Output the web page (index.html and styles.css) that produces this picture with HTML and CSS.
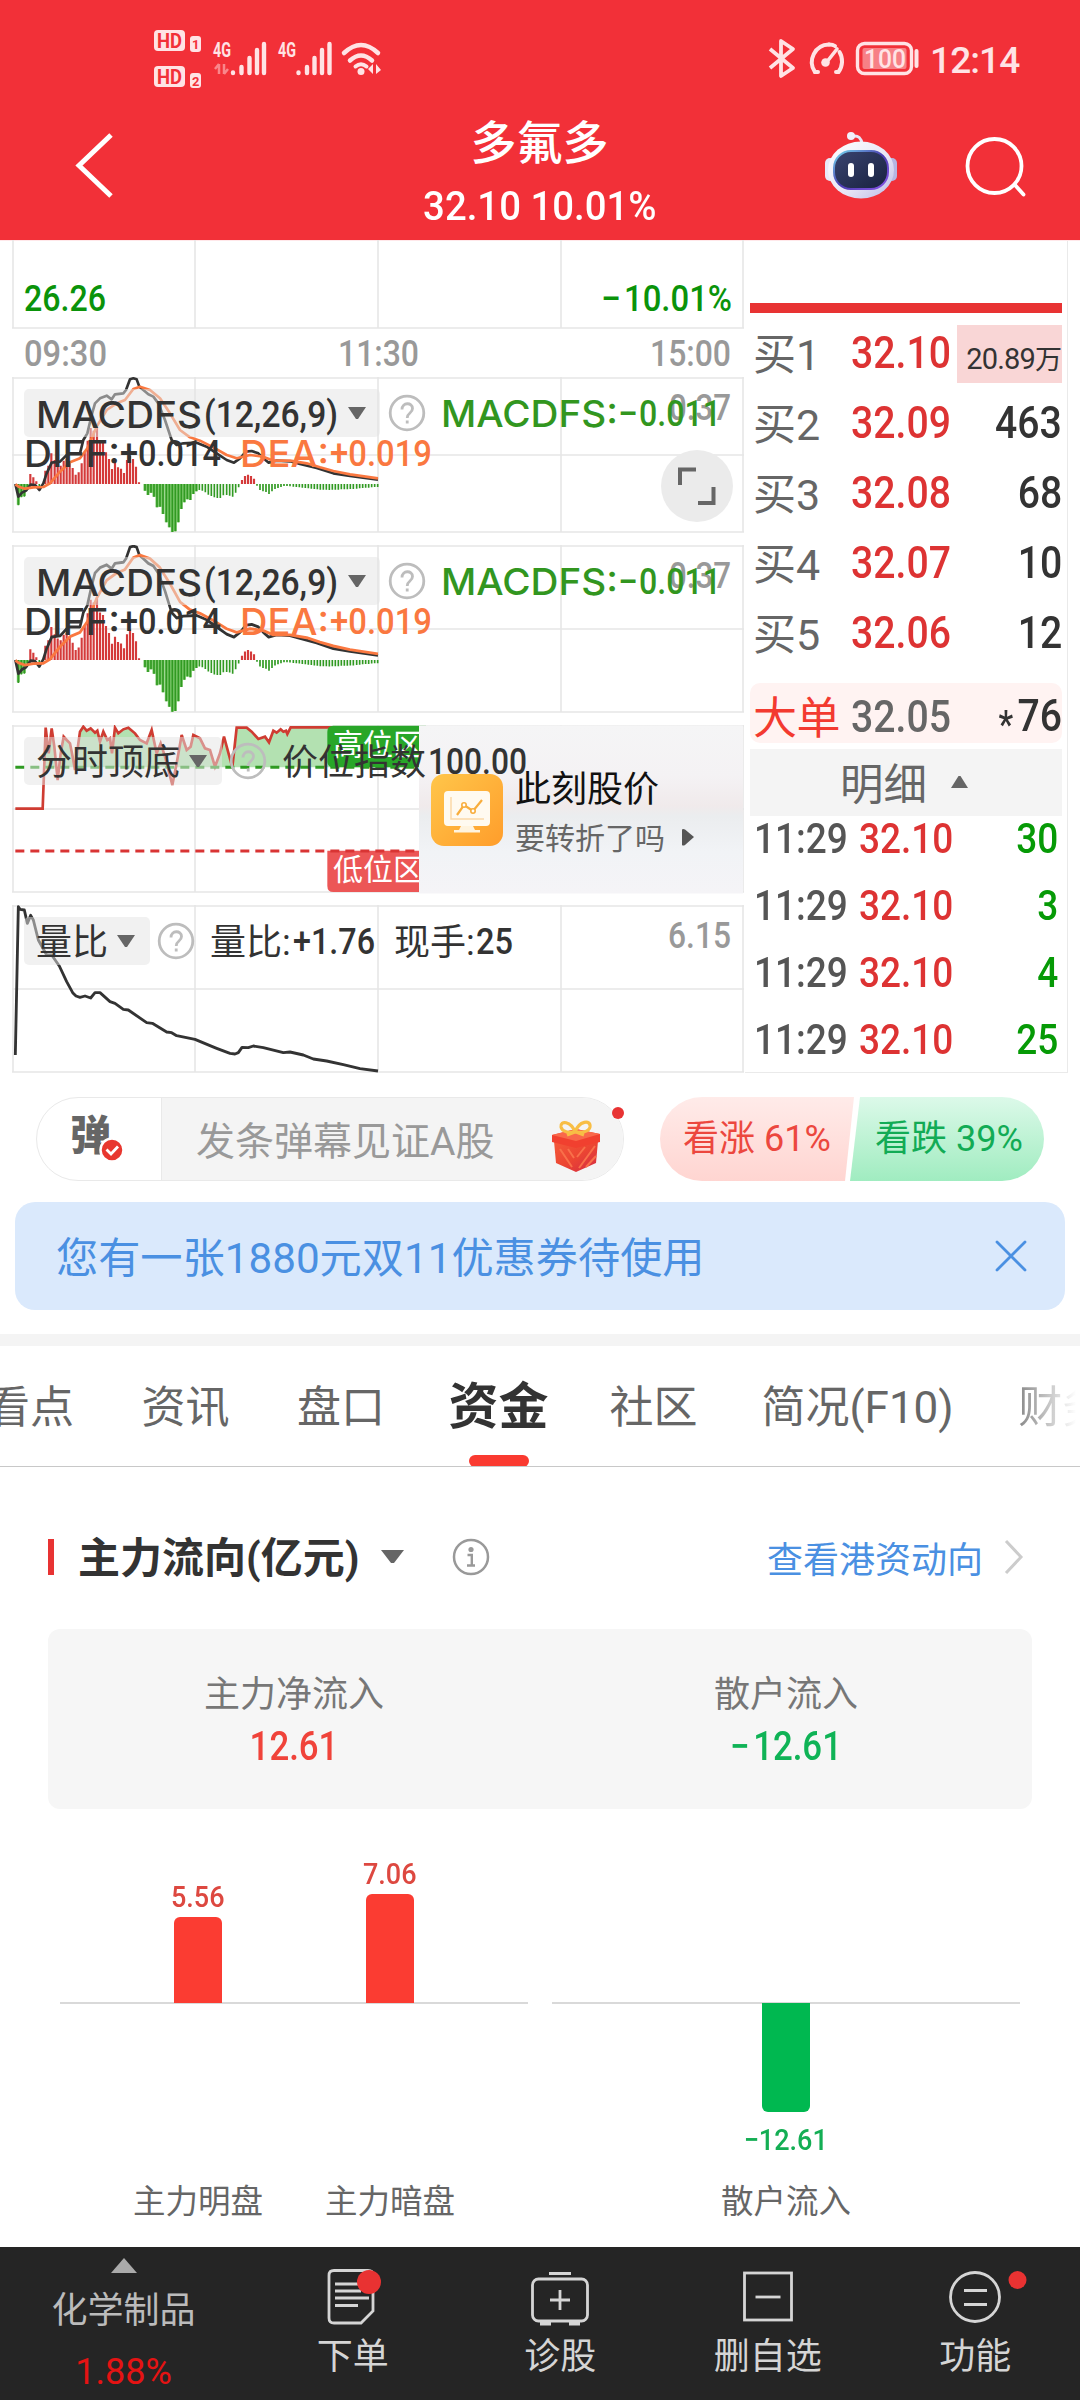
FILE: index.html
```html
<!DOCTYPE html>
<html lang="zh-CN">
<head>
<meta charset="utf-8">
<title>多氟多 32.10 10.01%</title>
<link rel="stylesheet" href="styles.css">
</head>
<body>
<header class="top">
  <div class="status">
    <svg class="status-left" width="240" height="70" viewBox="150 24 240 70">
      <g fill="#ffe3e5">
        <rect x="154" y="30" width="31" height="21" rx="4"/><rect x="190" y="36" width="11" height="16" rx="3"/>
        <rect x="154" y="66" width="31" height="21" rx="4"/><rect x="190" y="73" width="11" height="15" rx="3"/>
        <text x="213" y="57" font-size="20" font-weight="700" textLength="18" lengthAdjust="spacingAndGlyphs">4G</text>
        <text x="278" y="57" font-size="20" font-weight="700" textLength="18" lengthAdjust="spacingAndGlyphs">4G</text>
      </g>
      <g fill="#f23038" font-weight="700">
        <text x="157" y="48" font-size="21" textLength="25" lengthAdjust="spacingAndGlyphs">HD</text>
        <text x="157" y="84" font-size="21" textLength="25" lengthAdjust="spacingAndGlyphs">HD</text>
        <text x="192" y="49" font-size="13">1</text><text x="192" y="85.500" font-size="13">2</text>
      </g>
      <g stroke="#ffe3e5" stroke-width="4.400" stroke-linecap="round" fill="none">
        <path d="M233 73v-.5M241.500 73v-6M249.500 73v-15M257 73v-23M264 73v-29M298.500 73v-.5M307 73v-6M314.500 73v-15M322 73v-23M329.500 73v-29"/>
        <path d="M344 53q17-16 34 0M350 60.500q11-10 22 0" stroke-width="4.500"/>
        <path d="M355.500 66.500q5.500-4.500 11 0" stroke-width="4"/>
      </g>
      <circle cx="361" cy="71.500" r="3.500" fill="#ffe3e5"/>
      <path d="M373 64v10l-5-5zM376 64v10l5-4z" fill="#ffe3e5"/>
      <path d="M219 64v10M219 64l-4 5M224 64v10M224 74l4-5" stroke="#f9868b" stroke-width="2.500" fill="none"/>
    </svg>
    <svg class="status-right" width="160" height="44" viewBox="764 36 160 44" fill="none" stroke="#ffe3e5">
      <path d="M770 49l23 19-12 8V41l12 8-23 19" stroke-width="3.800" stroke-linejoin="round"/>
      <path d="M815 72a17.500 17.500 0 0 1 14-27.500M839.500 52a18 18 0 0 1-1 20" stroke-width="4" stroke-linecap="round"/>
      <path d="M815 72h3M838 72h-2M829 44.500q4 0 6 1.500" stroke-width="4" stroke-linecap="round"/>
      <path d="M837 49l-11 14" stroke-width="3.600" stroke-linecap="round"/><circle cx="825.500" cy="62.500" r="4.300" fill="#ffe3e5" stroke="none"/>
      <rect x="857.500" y="43.500" width="54" height="30" rx="7" stroke-width="3.400"/>
      <rect x="862.500" y="48" width="44" height="21" rx="2" fill="#f78086" stroke="none"/>
      <text x="864" y="67.500" font-size="25" fill="#ffe3e5" stroke="none" font-weight="500" textLength="42" lengthAdjust="spacingAndGlyphs">100</text>
      <path d="M916.500 51v15" stroke-width="4" stroke-linecap="round"/>
    </svg>
    <span class="clock">12:14</span>
  </div>
  <div class="titlebar">
    <svg class="back" width="44" height="70" viewBox="72 131 44 70"><path d="M111 136L79 166.500l32 30.500" fill="none" stroke="#fff" stroke-width="5"/></svg>
    <div class="stock"><h1>多氟多</h1><p><span class="sx">32.10 10.01%</span></p></div>
    <svg class="robot" width="76" height="70" viewBox="823 130 76 70">
      <defs>
        <linearGradient id="head" x1="0" y1="0" x2="1" y2="1"><stop offset="0" stop-color="#fff"/><stop offset=".6" stop-color="#e6e4f5"/><stop offset="1" stop-color="#b9b8e6"/></linearGradient>
        <linearGradient id="face" x1="0" y1="0" x2="1" y2="1"><stop offset="0" stop-color="#3a4470"/><stop offset="1" stop-color="#18213f"/></linearGradient>
        <linearGradient id="rim" x1="0" y1="0" x2="1" y2="1"><stop offset="0" stop-color="#76dcf0"/><stop offset=".5" stop-color="#4a3bb0"/><stop offset="1" stop-color="#8a55e8"/></linearGradient>
      </defs>
      <path d="M853 136q8-1 9 8" fill="none" stroke="#e8e6f6" stroke-width="3"/><circle cx="851" cy="136" r="4" fill="#f2f0fb"/>
      <rect x="825" y="158" width="10" height="23" rx="5" fill="#e9e8f8"/><rect x="887" y="158" width="10" height="23" rx="5" fill="#b6b5e2"/>
      <ellipse cx="861" cy="170" rx="33" ry="28.500" fill="url(#head)"/>
      <rect x="834" y="151" width="54" height="38" rx="17" fill="url(#face)" stroke="url(#rim)" stroke-width="2"/>
      <rect x="848" y="163" width="6" height="14" rx="3" fill="#fff"/><rect x="868" y="163" width="6" height="14" rx="3" fill="#fff"/>
    </svg>
    <svg class="search" width="66" height="66" viewBox="962 134 66 66" fill="none" stroke="#fff" stroke-width="3.800" stroke-linecap="round"><circle cx="994.500" cy="166" r="27"/><path d="M1015 185l8.500 9.500"/></svg>
  </div>
</header>

<main>
<section class="quote">
  <div class="charts">
    <svg width="745" height="137" viewBox="0 240 745 137">
      <path class="grid" d="M13 240V328M195 240V328M378 240V328M561 240V328M743 240V328M12 328H744"/>
      <g class="d med green"><text x="24" y="311" textLength="82" lengthAdjust="spacingAndGlyphs">26.26</text><text x="601" y="311" textLength="20" lengthAdjust="spacingAndGlyphs">−</text><text x="624" y="311" textLength="108" lengthAdjust="spacingAndGlyphs">10.01%</text></g>
      <g class="d grey"><text x="24" y="366" textLength="83" lengthAdjust="spacingAndGlyphs">09:30</text><text x="338" y="366" textLength="81" lengthAdjust="spacingAndGlyphs">11:30</text><text x="650" y="366" textLength="81" lengthAdjust="spacingAndGlyphs">15:00</text></g>
    </svg>

    <svg width="745" height="156" viewBox="0 377 745 156">
      <defs>
        <g id="macd" fill="none" stroke-linejoin="round">
          <path stroke="#7cc86b" stroke-width="9.200" d="M55 732v62M64 732v38M73 732v36M82 732v10M435 732v20M444 732v33M453 732v26M462 732v38M471 732v70M480 732v68M489 732v90M499 732v115M508 732v130M517 732v144M526 732v142M535 732v115M544 732v75M553 732v55M562 732v46M571 732v48M580 732v30M589 732v22"/>
          <path stroke="#319a22" stroke-width="5" d="M55 732v64M64 732v40M73 732v38M82 732v10M118 732v6M435 732v20M444 732v33M453 732v26M462 732v38M471 732v70M480 732v68M489 732v90M499 732v115M508 732v130M517 732v144M526 732v142M535 732v115M544 732v75M553 732v55M562 732v46M571 732v48M580 732v30M589 732v22M598 732v18M607 732v20M616 732v25M625 732v32M634 732v36M643 732v40M652 732v42M661 732v42M670 732v34M680 732v33M689 732v35M698 732v38M707 732v26M716 732v10M771 732v5M780 732v18M789 732v22M798 732v24M807 732v30M816 732v22M825 732v15M834 732v12M843 732v9M852 732v6M861 732v6M870 732v7M880 732v8M889 732v9M898 732v10M907 732v11M916 732v12M925 732v13M934 732v14M943 732v15M952 732v16M961 732v17M970 732v17M979 732v17M988 732v18M997 732v17M1006 732v17M1015 732v17M1024 732v16M1033 732v16M1042 732v16M1051 732v15M1060 732v15M1070 732v14M1079 732v13M1088 732v12M1097 732v11M1106 732v11M1115 732v10M1124 732v9M1133 732v9"/>
          <path stroke="#d43a3a" stroke-width="6.500" d="M91 732v-30M100 732v-20M109 732v-8M136 732v-40M145 732v-55M154 732v-92M164 732v-72M173 732v-60M182 732v-55M191 732v-70M200 732v-75M209 732v-65M218 732v-48M227 732v-28M236 732v-35M245 732v-62M254 732v-95M263 732v-130M272 732v-168M281 732v-160M291 732v-170M300 732v-132M309 732v-125M318 732v-95M327 732v-75M336 732v-45M345 732v-65M354 732v-50M363 732v-46M372 732v-33M381 732v-72M390 732v-85M399 732v-75M408 732v-52M417 732v-5M726 732v-12M735 732v-24M744 732v-28M753 732v-24M762 732v-16"/>
          <path stroke="#333" stroke-width="8" d="M46 732L55 770 66 758 78 752 92 734 105 735 118 750 130 730 140 700 155 668 180 665 205 640 240 640 250 600 262 580 275 525 285 490 300 475 320 467 335 478 345 463 370 460 378 450 390 418 400 415 410 418 418 440 430 450 445 463 460 470 475 490 495 540 515 600 530 615 550 610 590 608 620 620 650 640 680 660 702 668 720 655 738 635 755 633 775 640 790 655 806 668 830 662 870 664 900 672 950 684 1000 700 1050 708 1134 719"/>
          <path stroke="#fa7840" stroke-width="8" d="M46 733L56 740 75 746 100 742 130 741 150 730 180 695 210 667 240 655 262 625 290 560 320 510 350 490 375 480 400 447 420 440 450 450 480 475 510 520 540 570 570 592 600 602 640 622 680 645 710 655 750 645 790 650 820 662 870 662 920 670 960 682 1000 693 1050 703 1134 715"/>
        </g>
        <g id="help" fill="none" stroke="#bdbdbd" stroke-width="2.800"><circle r="16.800"/><path d="M-5-3.500c0-7.500 10.500-7.500 10.500-1 0 5-5.300 4-5.300 9.500"/><path d="M.2 7.500v3"/></g>
        <path id="drop" d="M-9-6h18l-8 12h-2z" fill="#666"/>
        <g id="macdlabels">
          <rect class="chip" x="24" y="389" width="356" height="48" rx="5"/>
          <text class="l" x="36" y="428" textLength="166" lengthAdjust="spacingAndGlyphs">MACDFS</text>
          <text class="d" x="204" y="427" textLength="134" lengthAdjust="spacingAndGlyphs">(12,26,9)</text>
          <use href="#drop" x="357" y="413"/><use href="#help" x="407" y="413"/>
          <text class="d grey" x="669" y="420" textLength="62" lengthAdjust="spacingAndGlyphs">0.37</text>
          <g class="leaf"><text class="l" x="441" y="427" textLength="177" lengthAdjust="spacingAndGlyphs">MACDFS:</text><text class="d" x="618" y="426" textLength="20" lengthAdjust="spacingAndGlyphs">−</text><text class="d" x="639" y="426" textLength="82" lengthAdjust="spacingAndGlyphs">0.011</text></g>
          <text class="l" x="24" y="467" textLength="96" lengthAdjust="spacingAndGlyphs">DIFF:</text><text class="d" x="120" y="466" textLength="101" lengthAdjust="spacingAndGlyphs">+0.014</text>
          <g class="orange"><text class="l" x="240" y="467" textLength="89" lengthAdjust="spacingAndGlyphs">DEA:</text><text class="d" x="330" y="466" textLength="102" lengthAdjust="spacingAndGlyphs">+0.019</text></g>
        </g>
      </defs>
      <path class="grid" d="M13 377V532M195 377V532M378 377V532M561 377V532M743 377V532M12 378H744M12 455H744M12 532H744"/>
      <use href="#macd" transform="translate(0 240) scale(.33333)"/>
      <use href="#macdlabels"/>
      <circle cx="697" cy="486" r="36" fill="#ebebeb"/>
      <path d="M680 485V469.500H696M713.500 487V503H698" fill="none" stroke="#666" stroke-width="4"/>
    </svg>

    <svg width="745" height="168" viewBox="0 545 745 168">
      <path class="grid" d="M13 545V712M195 545V712M378 545V712M561 545V712M743 545V712M12 546H744M12 629H744M12 712H744"/>
      <use href="#macd" transform="translate(0 397) scale(.33333 .35932)"/>
      <use href="#macdlabels" y="168"/>
    </svg>

    <svg width="745" height="169" viewBox="0 725 745 169">
      <defs>
        <linearGradient id="promo" x1="0" y1="0" x2="0" y2="1"><stop offset="0" stop-color="#f5f5f6"/><stop offset=".3" stop-color="#f4f2f4"/><stop offset=".48" stop-color="#f0eaeb"/><stop offset=".54" stop-color="#ebedef"/><stop offset=".75" stop-color="#f1f3f6"/><stop offset="1" stop-color="#f5f4f7"/></linearGradient>
        <linearGradient id="gold" x1="0" y1="0" x2="1" y2="1"><stop offset="0" stop-color="#ffc64a"/><stop offset="1" stop-color="#ff9d2b"/></linearGradient>
      </defs>
      <path class="grid" d="M13 725V892M195 725V892M378 725V892M561 725V892M743 725V892M12 726H744M12 809H744M12 892H744"/>
      <g transform="translate(0 540) scale(.33333)">
        <path fill="#b3e1b1" d="M133 682L137 563 146 640 155 565 163 620 171 682ZM178 682L191 590 210 610 225 682ZM229 682L240 575 250 560 260 572 272 565 285 578 292 572 300 605 310 575 322 600 330 595 336 640 345 563 355 580 370 568 385 563 405 580 420 600 440 610 455 570 470 640 482 610 495 650 505 682ZM528 682L545 585 560 630 572 620 580 585 600 595 615 625 630 630 645 680 660 640 672 590 697 682 710 563 740 563 755 575 775 597 795 590 807 607 820 572 830 578 842 568 850 575 862 582 872 562H1257V682Z"/>
        <path fill="none" stroke="#cf3c32" stroke-width="8" d="M46 806H128L137 563 146 640 155 565 163 620 173 720 182 640 191 590 200 600 210 610 218 650 225 690 235 610 240 575 250 560 260 572 272 565 285 578 292 572 300 605 310 575 322 600 330 595 336 640 345 563 355 580 370 568 385 563 405 580 420 600 440 610 455 570 470 640 482 610 495 650 517 735 530 670 545 585 560 630 572 620 580 585 600 595 615 625 630 630 645 680 660 640 672 590 697 682 710 563 740 563 755 575 775 597 795 590 807 607 820 572 830 578 842 568 850 575 858 572 862 582 872 562H1134"/>
        <path d="M46 682H1257" stroke="#2f9a22" stroke-width="9" stroke-dasharray="27 18"/>
        <path d="M982 575q0-18 18-18H1278V682H1000q-18 0-18-18Z" fill="#28a628"/>
        <path d="M982 932H1257V1056H1000q-18 0-18-18Z" fill="#ec5656"/>
        <path d="M46 933H1257" stroke="#d93434" stroke-width="9" stroke-dasharray="27 18"/>
      </g>
      <text class="zone" x="333" y="755">高位区</text><text class="zone" x="333" y="880">低位区</text>
      <rect x="419" y="725.500" width="324" height="168" fill="url(#promo)"/>
      <rect class="chip" x="24" y="737" width="198" height="48" rx="5"/>
      <text x="36" y="775" textLength="144">分时顶底</text><use href="#drop" x="198" y="761"/><use href="#help" x="248" y="761"/>
      <text x="282" y="775" textLength="144">价位指数</text><text class="d" x="428" y="774" textLength="99" lengthAdjust="spacingAndGlyphs">100.00</text>
      <rect x="431" y="774" width="72" height="72" rx="13" fill="url(#gold)"/>
      <rect x="444" y="791" width="46" height="35" rx="4" fill="#fffaf0"/><path d="M461 826h12l2 4h5v2.500h-26v-2.500h5z" fill="#fff4df"/>
      <path d="M451 797v22h33" fill="none" stroke="#fbd9a8" stroke-width="1.500"/><path d="M457 815l7-10 9 6 9-11" fill="none" stroke="#f8ad3c" stroke-width="2.200"/><circle cx="464" cy="805" r="2.200" fill="#fff" stroke="#f8ad3c" stroke-width="1.600"/><circle cx="473" cy="811" r="2.200" fill="#fff" stroke="#f8ad3c" stroke-width="1.600"/>
      <text class="promo-title" x="515" y="802">此刻股价</text><text class="promo-sub" x="515" y="849">要转折了吗</text>
      <path d="M682 829.500q1-1 3 0l9 7.500-9 8q-2 1-3 0z" fill="#555"/>
    </svg>

    <svg width="745" height="168" viewBox="0 905 745 168">
      <path class="grid" d="M13 905V1072M195 905V1072M378 905V1072M561 905V1072M743 905V1072M12 906H744M12 989H744M12 1072H744"/>
      <path transform="translate(0 880) scale(.33333)" fill="none" stroke="#333" stroke-width="8.500" stroke-linejoin="round" d="M46 525L55 80 60 88 73 90 82 130 92 106 100 120 115 180 140 225 155 225 178 258 200 305 218 338 228 348 240 352 255 348 272 354 285 338 300 338 330 365 345 370 370 388 385 390 440 428 457 430 500 456 515 458 530 467 585 478 630 497 650 505 690 520 705 522 715 518 726 502 745 503 760 498 790 503 850 518 870 516 910 525 940 537 980 543 1030 554 1080 566 1134 573"/>
      <rect class="chip" x="24" y="917" width="126" height="48" rx="5"/>
      <text x="36" y="955">量比</text><use href="#drop" x="126" y="941"/><use href="#help" x="176" y="941"/>
      <text x="210" y="955">量比:</text><text class="d" x="293" y="954" textLength="82" lengthAdjust="spacingAndGlyphs">+1.76</text>
      <text x="394" y="955">现手:</text><text class="d" x="476" y="954" textLength="37" lengthAdjust="spacingAndGlyphs">25</text>
      <text class="d grey" x="668" y="948" textLength="63" lengthAdjust="spacingAndGlyphs">6.15</text>
    </svg>
  </div>

  <aside class="book">
    <div class="ratio"></div>
    <ul class="bids">
      <li><span>买1</span><b><i class="sx">32.10</i></b><em class="hot"><i>20.89</i>万</em></li>
      <li><span>买2</span><b><i class="sx">32.09</i></b><em><i class="sx">463</i></em></li>
      <li><span>买3</span><b><i class="sx">32.08</i></b><em><i class="sx">68</i></em></li>
      <li><span>买4</span><b><i class="sx">32.07</i></b><em><i class="sx">10</i></em></li>
      <li><span>买5</span><b><i class="sx">32.06</i></b><em><i class="sx">12</i></em></li>
      <li class="big"><span>大单</span><b><i class="sx">32.05</i></b><em><i class="sx"><sub>*</sub>76</i></em></li>
    </ul>
    <div class="detail">明细<svg width="17" height="12" viewBox="0 0 17 12"><path d="M0 12h17L9.500 0h-2z" fill="#666"/></svg></div>
    <ul class="trades">
      <li><span class="sx">11:29</span><b><i class="sx">32.10</i></b><em><i class="sx">30</i></em></li>
      <li><span class="sx">11:29</span><b><i class="sx">32.10</i></b><em><i class="sx">3</i></em></li>
      <li><span class="sx">11:29</span><b><i class="sx">32.10</i></b><em><i class="sx">4</i></em></li>
      <li><span class="sx">11:29</span><b><i class="sx">32.10</i></b><em><i class="sx">25</i></em></li>
    </ul>
  </aside>
</section>

<section class="social">
  <div class="danmu">
    <div class="toggle">弹<svg class="tick" width="26" height="26" viewBox="0 0 26 26"><circle cx="13" cy="13" r="11.500" fill="#e8372f" stroke="#fff" stroke-width="2.500"/><path d="M7.500 12.500l4.500 4.500 7-7.500" fill="none" stroke="#fff" stroke-width="2.800"/></svg></div>
    <div class="field"><span>发条弹幕见证A股</span>
      <svg width="52" height="54" viewBox="550 1120 52 54">
        <defs><linearGradient id="box" x1="0" y1="0" x2="1" y2="1"><stop offset="0" stop-color="#f4593a"/><stop offset=".5" stop-color="#ec4632"/><stop offset="1" stop-color="#d32a45"/></linearGradient></defs>
        <path d="M554 1142l22 6v25l-20-9zM598 1142l-22 6v25l20-9z" fill="url(#box)"/>
        <path d="M552 1136l24-6 24 5v8l-24 6-24-6z" fill="#f1402f"/><path d="M552 1136l24-6 24 5-24 7z" fill="#f9684a"/>
        <path d="M560 1150l12 18M568 1150l6 9M595 1147l-16 22M596 1157l-10 11M585 1148l-8 10" stroke="#f9704a" stroke-width="2"/>
        <path d="M575 1133c-4-11-15-12-14-5 1 5 8 6 14 5 4-11 16-13 15-5-1 5-9 6-15 5zM575 1133l-8 3M576 1133l8 3" fill="none" stroke="#f8be45" stroke-width="3.200"/>
      </svg>
    </div>
    <i class="dot"></i>
  </div>
  <div class="vote"><div class="up">看涨 61%</div><div class="down">看跌 39%</div></div>
</section>

<section class="coupon"><span>您有一张1880元双11优惠券待使用</span><svg width="32" height="32" viewBox="0 0 32 32"><path d="M2 2l28 28M30 2L2 30" stroke="#4a90e2" stroke-width="2.800" stroke-linecap="round"/></svg></section>

<nav class="tabs"><a>看点</a><a>资讯</a><a>盘口</a><a class="on">资金</a><a>社区</a><a>简况(F10)</a><a class="cut">财务</a></nav>

<section class="flow">
  <div class="head">
    <h2>主力流向(亿元)</h2>
    <svg width="23" height="14" viewBox="0 0 23 14"><path d="M0 0h23L13 13h-3z" fill="#666"/></svg>
    <svg class="info" width="38" height="38" viewBox="-19 -19 38 38"><circle r="17" fill="none" stroke="#999" stroke-width="2.500"/><circle cy="-7.500" r="2.600" fill="#999"/><path d="M-3.500-2H.8V8M-4 8.500H4" fill="none" stroke="#999" stroke-width="2.400"/></svg>
    <a>查看港资动向</a>
    <svg width="20" height="36" viewBox="0 0 20 36"><path d="M2 2l15 16L2 34" fill="none" stroke="#ccc" stroke-width="3"/></svg>
  </div>
  <div class="summary">
    <div>主力净流入<strong class="sx up-c">12.61</strong></div>
    <div>散户流入<strong class="sx down-c"><i class="minus">−</i>12.61</strong></div>
  </div>
  <div class="bars">
    <div class="pane">
      <div class="col"><div class="pos"><b class="sx">5.56</b><i style="height:86px"></i></div><div class="neg"></div><span>主力明盘</span></div>
      <div class="col"><div class="pos"><b class="sx">7.06</b><i style="height:109px"></i></div><div class="neg"></div><span>主力暗盘</span></div>
    </div>
    <div class="pane">
      <div class="col"><div class="pos"></div><div class="neg"><i style="height:109px"></i><b class="sx">−12.61</b></div><span>散户流入</span></div>
    </div>
  </div>
</section>
</main>

<footer class="dock">
  <a class="sector"><svg width="26" height="15" viewBox="0 0 26 15"><path d="M13 0l13 15H0z" fill="#aaa"/></svg><span>化学制品</span><b>1.88%</b></a>
  <a><svg width="60" height="60" viewBox="0 0 60 60" fill="none" stroke="#d5d5d5" stroke-width="2.800"><path d="M11 4.500h34q5 0 5 5V45L38 57H11q-5 0-5-5V9.500q0-5 5-5z"/><path d="M12 18h24M12 25h26M12 32h34M12 39.500h23"/><circle cx="46" cy="16" r="12" fill="#e93232" stroke="none"/></svg><span>下单</span></a>
  <a><svg width="60" height="60" viewBox="0 0 60 60" fill="none" stroke="#d5d5d5" stroke-width="2.800"><rect x="2.500" y="13" width="55" height="42" rx="6"/><path d="M19 7.500h22M20 34h20M30 24v20"/><path d="M10 57.500h11M39 57.500h11" stroke-width="4"/></svg><span>诊股</span></a>
  <a><svg width="60" height="60" viewBox="0 0 60 60" fill="none" stroke="#d5d5d5" stroke-width="2.800"><rect x="6.500" y="7" width="47" height="47"/><path d="M17.500 31h25"/></svg><span>删自选</span></a>
  <a><svg width="104" height="60" viewBox="-22 0 104 60" fill="none" stroke="#d5d5d5" stroke-width="2.800"><circle cx="30" cy="31" r="24.500"/><path d="M19 24.500h23M19 38.500h23"/><circle cx="72.500" cy="14" r="9" fill="#e93232" stroke="none"/></svg><span>功能</span></a>
</footer>
</body>
</html>
```
FILE: styles.css
```css
* { box-sizing: border-box; }
body { margin: 0; width: 1080px; background: #fff; color: #333; font-family: Roboto, "Noto Sans CJK SC", sans-serif; }
h1, h2, p, ul { margin: 0; padding: 0; font-weight: 400; }
ul { list-style: none; }
i, em { font-style: normal; }
svg { display: block; flex: none; }

/* narrow numerals */
.sx { display: inline-block; transform: scaleX(.87); transform-origin: center; }

.top { height: 240px; background: #f23038; color: #fff; }
.status { height: 100px; padding: 24px 60px 0 150px; display: flex; align-items: flex-start; color: #ffe3e5; }
.status-right { margin: 12px 0 0 374px; }
.clock { margin: 14px 0 0 6px; font-size: 37px; line-height: 46px; font-weight: 500; letter-spacing: -.9px; }
.titlebar { height: 140px; padding: 0 52px 0 72px; display: flex; align-items: flex-start; }
.back { margin-top: 30px; }
.stock { flex: 1; text-align: center; padding-left: 140px; }
.stock h1 { margin-top: 15px; font-size: 46px; line-height: 56px; font-weight: 500; }
.stock p { margin-top: 8px; font-size: 41px; line-height: 54px; font-weight: 500; white-space: nowrap; }
.stock .sx { transform: scaleX(.935); }
.robot { margin: 30px 63px 0 0; }
.search { margin-top: 34px; }

.quote { display: flex; height: 833px; border-top: 1px solid #ffe8ea; }
.charts { width: 745px; height: 833px; display: flex; flex-direction: column; margin-top: -1px; }
.charts svg:nth-child(n+3) { margin-top: 12px; }
.charts svg:last-child { margin-top: 11px; }
.charts text { font-size: 36px; fill: #333; }
.charts .zone { font-size: 30px; fill: #fff; }
.charts .promo-title { fill: #111; }
.charts .promo-sub { font-size: 30px; fill: #666; }
.charts .l { font-family: Inter, Roboto, sans-serif; font-size: 37px; font-weight: 500; }
.charts .d, .charts .d text { font-size: 36.5px; font-weight: 500; }
.charts .green text { fill: #0a930a; }
.charts .grey, .charts .grey text { fill: #999; }
.charts .leaf text { fill: #32961f; }
.charts .orange text { fill: #fa7840; }
.grid { fill: none; stroke: #e6e6e6; stroke-width: 1.6; }
.chip { fill: rgba(227, 227, 227, .5); }

.book { width: 323px; padding: 62px 5px 0 5px; border-right: 1px solid #eaeaea; border-bottom: 1px solid #eaeaea; }
.ratio { height: 10px; background: #e83333; }
.bids { margin-top: 4px; }
.bids li, .trades li { display: grid; grid-template-columns: 98px 101px 1fr; align-items: center; white-space: nowrap; }
.bids li { height: 70px; padding-left: 3px; font-size: 43px; }
.bids span { color: #666; padding-bottom: 2px; }
.bids b, .trades b { font-weight: 500; color: #dd3333; }
.bids b .sx, .bids em .sx { font-size: 45px; }
.bids b .sx, .trades .sx { transform-origin: left; }
.bids em { text-align: right; font-weight: 500; }
.bids em .sx, .trades em .sx { transform-origin: right; }
.bids .hot { height: 58px; padding-top: 13px; margin: 3px 0 0 5px; background: #f9d6d6; font-size: 27px; line-height: 42px; font-weight: 400; }
.hot i { font-size: 29px; letter-spacing: -.8px; }
.bids .big { height: 60px; margin-top: 16px; padding-bottom: 4px; background: #fff3f2; border-radius: 10px; }
.bids .big span { color: #f33a30; font-size: 44px; letter-spacing: -.6px; }
.bids .big b { color: #666; }
.big sub { display: inline-block; font-size: 38px; line-height: 1; vertical-align: -7px; margin-right: 5px; }
.detail { margin-top: 6px; height: 67px; padding: 0 0 2px 90px; background: #f4f4f4; color: #666; font-size: 43.5px; display: flex; align-items: center; gap: 24px; }
.trades { margin-top: -11px; }
.trades li { height: 67px; padding: 0 4px 0 4px; grid-template-columns: 105px 93px 1fr; font-size: 42.5px; color: #555; }
.trades span { font-weight: 500; }
.trades em { text-align: right; color: #069a06; font-weight: 500; }

.social { display: flex; margin-top: 24px; padding-left: 36px; gap: 36px; height: 84px; }
.danmu { position: relative; display: flex; width: 588px; border: 1px solid #e9e9e9; border-radius: 42px; }
.toggle { position: relative; width: 125px; padding-left: 33px; font-size: 41px; line-height: 76px; font-weight: 900; color: #666; border-right: 1px solid #e9e9e9; }
.tick { position: absolute; left: 62px; top: 39px; }
.field { flex: 1; display: flex; align-items: center; justify-content: space-between; padding: 0 21px 0 34px; background: #f4f4f4; border-radius: 0 42px 42px 0; color: #999; font-size: 39px; }
.field span { padding-bottom: 3px; }
.field svg { margin-top: 14px; }
.dot { position: absolute; right: -1px; top: 9px; width: 12px; height: 12px; border-radius: 50%; background: #e83333; }
.vote { display: flex; width: 384px; font-size: 36px; line-height: 84px; }
.vote div { height: 84px; width: 194px; padding-left: 23px; white-space: nowrap; }
.up { background: linear-gradient(#ffebe9, #ffd5d1); color: #ec473e; border-radius: 42px 0 0 42px; clip-path: polygon(0 0, 100% 0, 185px 100%, 0 100%); }
.vote .down { margin-left: -4px; padding-left: 25px; background: linear-gradient(#dcf9e9, #a0ecc0); color: #12ab55; border-radius: 0 42px 42px 0; clip-path: polygon(10px 0, 100% 0, 100% 100%, 0 100%); }

.coupon { margin: 21px 15px 24px; height: 108px; padding: 0 38px 0 41px; display: flex; align-items: center; justify-content: space-between; background: #dae9fc; border-radius: 20px; color: #4a90e2; font-size: 42.2px; }
.coupon span { padding-bottom: 4px; }

.tabs { position: relative; height: 133px; border-top: 12px solid #f4f4f4; border-bottom: 1px solid #c8c8c8; display: flex; align-items: center; overflow: hidden; white-space: nowrap; font-size: 44px; color: #666; line-height: 127px; }
.tabs a { margin-right: 67.5px; padding-top: 5px; }
.tabs a:first-child { margin-left: -14px; }
.tabs .on { position: relative; margin: 0 61px 0 -4px; padding-top: 3px; font-size: 50px; font-weight: 700; color: #333; }
.tabs .on::after { content: ""; position: absolute; left: 20px; bottom: 4px; width: 60px; height: 12px; border-radius: 6px; background: #fa3a30; }
.tabs a:nth-child(5) { margin-right: 64px; }
.tabs .cut { margin: 0 0 0 -3px; color: transparent; background: linear-gradient(90deg, #888, #fff 66%); background-clip: text; -webkit-background-clip: text; }

.head { display: flex; align-items: center; height: 60px; margin: 60px 56px 0 48px; }
.head h2 { font-size: 42px; font-weight: 700; line-height: 40px; height: 36px; border-left: 6px solid #e83333; padding-left: 24px; }
.head h2 + svg { margin-left: 22px; }
.info { margin-left: 48px; }
.head a { margin: 0 21px 0 auto; font-size: 36px; color: #4a90e2; }
.summary { display: flex; margin: 42px 48px 0; height: 180px; padding-top: 40px; background: #f6f6f6; border-radius: 12px; color: #777; font-size: 36px; line-height: 52px; text-align: center; }
.summary div { flex: 1; }
.summary strong { display: block; font-size: 40px; font-weight: 500; line-height: 51px; }
.minus { margin-right: 4px; }
.up-c { color: #f0433a; }
.down-c { color: #0fb356; }
.bars { display: flex; gap: 24px; padding: 0 60px; margin-top: 33px; height: 405px; }
.pane { width: 468px; display: flex; justify-content: center; background: linear-gradient(#d9d9d9, #d9d9d9) 0 160px / 100% 2px no-repeat; }
.col { width: 192px; display: flex; flex-direction: column; align-items: center; }
.pos, .neg { height: 161px; display: flex; flex-direction: column; align-items: center; }
.pos { justify-content: flex-end; }
.neg { height: 179px; }
.col i { width: 48px; background: #fb3c32; border-radius: 6px 6px 0 0; }
.neg i { background: #00b850; border-radius: 0 0 6px 6px; }
.col b { font-size: 30px; font-weight: 500; line-height: 36px; margin-bottom: 2px; color: #dd4840; transform: scaleX(.9); }
.neg b { margin-top: 10px; color: #14ae54; }
.col span { font-size: 32.5px; line-height: 40px; color: #666; }

.dock { height: 153px; display: flex; background: #252525; color: #d5d5d5; font-size: 36px; }
.dock a { width: 207.5px; display: flex; flex-direction: column; align-items: center; padding-top: 19px; }
.dock span { line-height: 48px; margin-top: 7px; }
.dock .sector { width: 249px; padding: 11px 2px 0 0; color: #bbb; }
.sector b { margin-top: 16px; font-weight: 400; color: #e51313; line-height: 42px; }
.dock .sector span { margin-top: 14px; }
```
